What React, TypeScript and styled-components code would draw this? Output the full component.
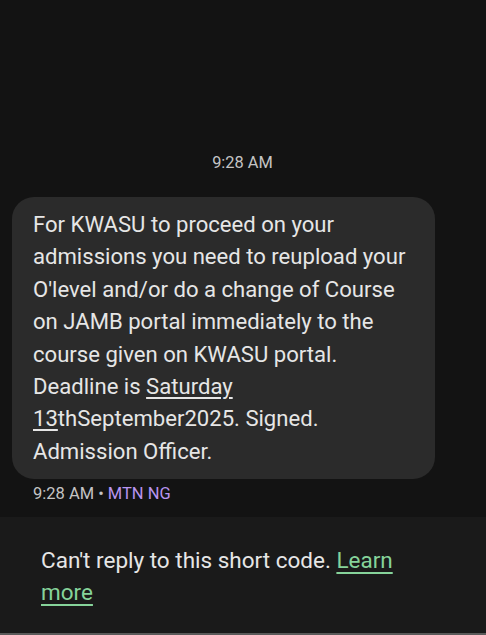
import React from "react";
import styled, { createGlobalStyle } from "styled-components";

const Global = createGlobalStyle`
  html, body { margin: 0; padding: 0; background: #131313; }
  body { font-family: Roboto, "Noto Sans", "Liberation Sans", sans-serif; }
`;

const Screen = styled.div`
  width: 486px;
  height: 635px;
  background: #131313;
  display: flex;
  flex-direction: column;
  overflow: hidden;
`;

const Thread = styled.div`
  flex: 1;
  display: flex;
  flex-direction: column;
  padding: 154px 0 0 0;
`;

const TimeHeader = styled.div`
  text-align: center;
  color: #c4c4c4;
  font-size: 16.4px;
  line-height: 18px;
  margin-left: -1px;
`;

const Bubble = styled.div`
  margin: 25px 51px 0 12px;
  background: #2b2b2b;
  border-radius: 22px;
  padding: 11px 8px 12px 21px;
  color: #e6e6e6;
  font-size: 22.1px;
  line-height: 32.4px;
  white-space: nowrap;
`;

const U = styled.span`
  text-decoration: underline;
  text-underline-offset: 3px;
  text-decoration-thickness: 1.5px;
`;

const Meta = styled.div`
  margin: 5px 0 0 33px;
  font-size: 16.5px;
  line-height: 20px;
  color: #c4c4c4;
`;

const Carrier = styled.span`
  color: #b995f0;
`;

const Panel = styled.div`
  height: 118px;
  background: #1a1a1a;
  border-bottom: 2px solid #5a5a5a;
  padding: 27px 30px 0 41px;
  box-sizing: border-box;
  color: #e6e6e6;
  font-size: 22.5px;
  line-height: 32px;
`;

const Learn = styled.span`
  color: #86d39a;
  text-decoration: underline;
  text-underline-offset: 4px;
  text-decoration-thickness: 2px;
`;

export default function App() {
  return (
    <>
      <Global />
      <Screen>
        <Thread>
          <TimeHeader>9:28 AM</TimeHeader>
          <Bubble>
            For KWASU to proceed on your
            <br />
            admissions you need to reupload your
            <br />
            O'level and/or do a change of Course
            <br />
            on JAMB portal immediately to the
            <br />
            course given on KWASU portal.
            <br />
            Deadline is <U>Saturday</U>
            <br />
            <U>13</U>thSeptember2025. Signed.
            <br />
            Admission Officer.
          </Bubble>
          <Meta>
            9:28 AM • <Carrier>MTN NG</Carrier>
          </Meta>
        </Thread>
        <Panel>
          Can't reply to this short code. <Learn>Learn</Learn>
          <br />
          <Learn>more</Learn>
        </Panel>
      </Screen>
    </>
  );
}
